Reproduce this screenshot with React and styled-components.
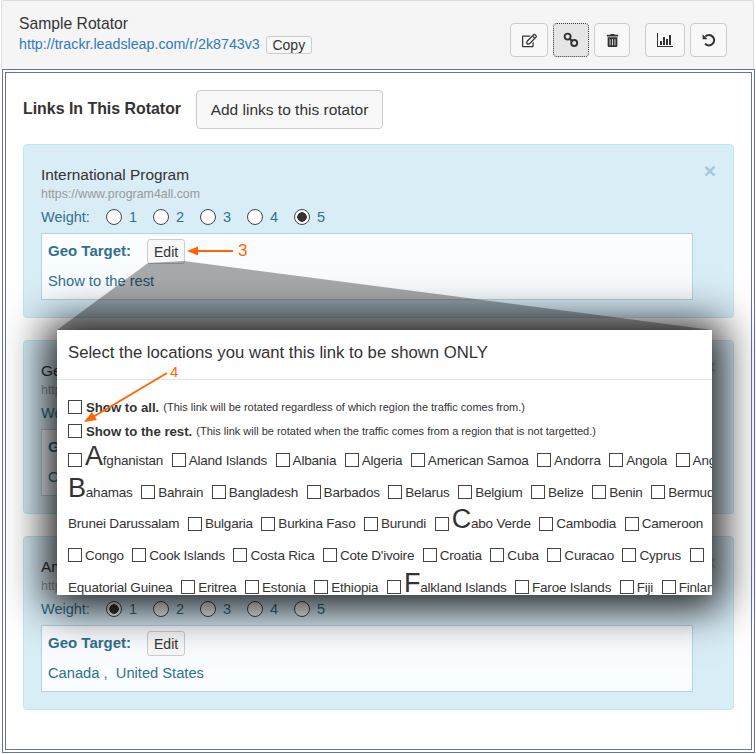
import React from "react";
import styled, { createGlobalStyle } from "styled-components";
import { FaRegEdit, FaTrashAlt } from "react-icons/fa";

const GlobalStyle = createGlobalStyle`
  html, body {
    margin: 0;
    padding: 0;
    background: #fff;
    font-family: "Liberation Sans", Arial, sans-serif;
    color: #333;
  }
  * { box-sizing: border-box; }
`;

const LinkIcon = () => (
  <svg width="16" height="16" viewBox="0 0 16 16" fill="none" stroke="#333" strokeWidth="1.9">
    <circle cx="4.6" cy="4.6" r="3" />
    <circle cx="11.2" cy="11" r="3" />
    <path d="M6.5 6.5l3 3" />
  </svg>
);

const StatsIcon = () => (
  <svg width="16" height="14" viewBox="0 0 16 14" fill="#333">
    <rect x="0" y="0" width="1" height="13" />
    <rect x="0" y="13" width="16" height="1" />
    <rect x="3" y="8" width="2" height="4" />
    <rect x="6" y="4" width="2" height="8" />
    <rect x="9" y="6" width="2" height="6" />
    <rect x="12" y="2" width="2" height="10" />
  </svg>
);

const UndoIcon = () => (
  <svg width="14" height="14" viewBox="0 0 14 14" fill="none">
    <path d="M3.4 3.4A5.2 5.2 0 1 1 3 10.6" stroke="#333" strokeWidth="2" />
    <path d="M0.6 1.2v5h5z" fill="#333" />
  </svg>
);

const links = [
  {
    title: "International Program",
    url: "https://www.program4all.com",
    weight: 5,
    geo: ["Show to the rest"],
  },
  {
    title: "German Program",
    url: "https://www.program4de.com",
    weight: 3,
    geo: ["Canada"],
  },
  {
    title: "American Program",
    url: "https://www.program4us.com",
    weight: 1,
    geo: ["Canada", "United States"],
  },
];

const countryRows = [
  [
    { big: "A", name: "fghanistan", box: true },
    { name: "Aland Islands", box: true },
    { name: "Albania", box: true },
    { name: "Algeria", box: true },
    { name: "American Samoa", box: true },
    { name: "Andorra", box: true },
    { name: "Angola", box: true },
    { name: "Anguilla", box: true },
  ],
  [
    { big: "B", name: "ahamas" },
    { name: "Bahrain", box: true },
    { name: "Bangladesh", box: true },
    { name: "Barbados", box: true },
    { name: "Belarus", box: true },
    { name: "Belgium", box: true },
    { name: "Belize", box: true },
    { name: "Benin", box: true },
    { name: "Bermuda", box: true },
  ],
  [
    { name: "Brunei Darussalam" },
    { name: "Bulgaria", box: true },
    { name: "Burkina Faso", box: true },
    { name: "Burundi", box: true },
    { big: "C", name: "abo Verde", box: true },
    { name: "Cambodia", box: true },
    { name: "Cameroon", box: true },
  ],
  [
    { name: "Congo", box: true },
    { name: "Cook Islands", box: true },
    { name: "Costa Rica", box: true },
    { name: "Cote D'ivoire", box: true },
    { name: "Croatia", box: true },
    { name: "Cuba", box: true },
    { name: "Curacao", box: true },
    { name: "Cyprus", box: true },
    { name: "", box: true },
  ],
  [
    { name: "Equatorial Guinea" },
    { name: "Eritrea", box: true },
    { name: "Estonia", box: true },
    { name: "Ethiopia", box: true },
    { big: "F", name: "alkland Islands", box: true },
    { name: "Faroe Islands", box: true },
    { name: "Fiji", box: true },
    { name: "Finland", box: true },
  ],
];

const LinkCard = ({ link }) => (
  <Card>
    <CloseMark>×</CloseMark>
    <CardTitle>{link.title}</CardTitle>
    <CardUrl>{link.url}</CardUrl>
    <WeightRow>
      <WeightLabel>Weight:</WeightLabel>
      {[1, 2, 3, 4, 5].map((n) => (
        <WeightOption key={n}>
          <Radio $on={n === link.weight} />
          {n}
        </WeightOption>
      ))}
    </WeightRow>
    <GeoBox>
      <GeoHead>
        <GeoLabel>Geo Target:</GeoLabel>
        <EditButton>Edit</EditButton>
      </GeoHead>
      <GeoList>{link.geo.join(" ,  ")}</GeoList>
    </GeoBox>
  </Card>
);

const App = () => (
  <Page>
    <GlobalStyle />
    <Header>
      <div>
        <RotatorName>Sample Rotator</RotatorName>
        <UrlLine>
          <RotatorUrl>http://trackr.leadsleap.com/r/2k8743v3</RotatorUrl>
          <CopyButton>Copy</CopyButton>
        </UrlLine>
      </div>
      <Toolbar>
        <ToolGroup>
          <ToolButton $w={38}><FaRegEdit size={15} /></ToolButton>
          <ToolButton $w={36} $active><LinkIcon /></ToolButton>
          <ToolButton $w={36}><FaTrashAlt size={13} /></ToolButton>
        </ToolGroup>
        <ToolGroup>
          <ToolButton $w={40}><StatsIcon /></ToolButton>
          <ToolButton $w={37}><UndoIcon /></ToolButton>
        </ToolGroup>
      </Toolbar>
    </Header>
    <Frame>
      <Heading>
        <HeadingText>Links In This Rotator</HeadingText>
        <AddButton>Add links to this rotator</AddButton>
      </Heading>
      <Cards>
        {links.map((link) => (
          <LinkCard key={link.title} link={link} />
        ))}
      </Cards>
    </Frame>

    <Callout width="756" height="754" viewBox="0 0 756 754">
      <polygon points="148,263 184,261 712,330 57,330" fill="rgba(0,0,0,0.33)" />
      <path d="M233 251H195" stroke="#f60" strokeWidth="2" />
      <path d="M187 251l11-4.5v9z" fill="#f60" />
    </Callout>
    <StepNumber $x={238} $y={243} $size={17}>3</StepNumber>

    <Modal>
      <ModalTitle>Select the locations you want this link to be shown ONLY</ModalTitle>
      <ModalBody>
        <OptionRow>
          <CheckBox />
          <OptionName>Show to all.</OptionName>
          <OptionHint>(This link will be rotated regardless of which region the traffic comes from.)</OptionHint>
        </OptionRow>
        <OptionRow>
          <CheckBox />
          <OptionName>Show to the rest.</OptionName>
          <OptionHint>(This link will be rotated when the traffic comes from a region that is not targetted.)</OptionHint>
        </OptionRow>
        {countryRows.map((row, i) => (
          <CountryRow key={i}>
            {row.map((c) => (
              <Country key={(c.big || "") + c.name}>
                {c.box && <CheckBox />}
                <CountryName>
                  {c.big && <BigLetter>{c.big}</BigLetter>}
                  {c.name}
                </CountryName>
              </Country>
            ))}
          </CountryRow>
        ))}
      </ModalBody>
    </Modal>
    <StepNumber $x={170} $y={364} $size={15}>4</StepNumber>
    <Callout width="756" height="754" viewBox="0 0 756 754">
      <path d="M167 373L93 417" stroke="#f60" strokeWidth="2" />
      <path d="M84 422l8-10 5 8z" fill="#f60" />
    </Callout>
  </Page>
);

export default App;

const Page = styled.div`
  position: relative;
  width: 756px;
  height: 754px;
  overflow: hidden;
`;

const Header = styled.header`
  display: flex;
  justify-content: space-between;
  height: 69px;
  margin: 0 2px 0 1px;
  padding: 14px 26px 0 17px;
  background: #f5f5f5;
  border: 1px solid #ddd;
  border-bottom: none;
  border-radius: 3px 3px 0 0;
`;

const RotatorName = styled.div`
  font-size: 15.7px;
  line-height: 18px;
`;

const UrlLine = styled.div`
  display: flex;
  align-items: center;
  gap: 6px;
  margin-top: 1px;
  height: 20px;
`;

const RotatorUrl = styled.a`
  font-size: 14.25px;
  color: #337ab7;
`;

const CopyButton = styled.button`
  width: 46px;
  height: 18px;
  padding: 0;
  margin-top: 1px;
  font: 14px "Liberation Sans", Arial, sans-serif;
  color: #333;
  background: #f8f8f8;
  border: 1px solid #ccc;
  border-radius: 3px;
`;

const Toolbar = styled.div`
  display: flex;
  gap: 15px;
  padding-top: 8px;
`;

const ToolGroup = styled.div`
  display: flex;
  gap: 5px;
`;

const ToolButton = styled.button`
  display: flex;
  align-items: center;
  justify-content: center;
  width: ${(p) => p.$w}px;
  height: 34px;
  padding: 0;
  color: #333;
  background: ${(p) => (p.$active ? "#e6e6e6" : "#f8f8f8")};
  border: 1px ${(p) => (p.$active ? "dotted #333" : "solid #ccc")};
  border-radius: 4px;
`;

const Frame = styled.main`
  height: 684px;
  margin: 0 1px 0 2px;
  padding: 17px 17px 0;
  border: 4px double #66739c;
`;

const Heading = styled.div`
  display: flex;
  align-items: center;
  gap: 14px;
  height: 39px;
`;

const HeadingText = styled.h2`
  width: 159px;
  margin: 0 0 2px;
  font-size: 15.9px;
  font-weight: 700;
`;

const AddButton = styled.button`
  width: 187px;
  height: 39px;
  padding: 0;
  font: 15.5px "Liberation Sans", Arial, sans-serif;
  color: #333;
  background: #f8f8f8;
  border: 1px solid #ccc;
  border-radius: 4px;
`;

const Cards = styled.div`
  display: flex;
  flex-direction: column;
  gap: 22px;
  margin-top: 15px;
`;

const Card = styled.section`
  position: relative;
  height: 174px;
  padding: 21px 40px 0 17px;
  background: #d9edf7;
  border: 1px solid #bce8f1;
  border-radius: 4px;
`;

const CloseMark = styled.span`
  position: absolute;
  top: 15px;
  right: 17px;
  font-size: 21px;
  line-height: 21px;
  font-weight: 700;
  color: #a9c6d4;
`;

const CardTitle = styled.div`
  font-size: 15.4px;
  line-height: 18px;
`;

const CardUrl = styled.div`
  margin-top: 3px;
  font-size: 12.4px;
  line-height: 14px;
  color: #999;
`;

const WeightRow = styled.div`
  display: flex;
  align-items: center;
  height: 20px;
  margin-top: 6px;
  font-size: 14.5px;
  color: #31708f;
`;

const WeightLabel = styled.span`
  width: 65px;
`;

const WeightOption = styled.label`
  display: flex;
  align-items: center;
  gap: 7px;
  width: 47px;
`;

const Radio = styled.span`
  display: block;
  flex: none;
  width: 16px;
  height: 16px;
  border: 1px solid #444;
  border-radius: 50%;
  background: ${(p) => (p.$on ? "radial-gradient(circle, #333 0 4.5px, #fff 5px)" : "#fff")};
`;

const GeoBox = styled.div`
  height: 67px;
  margin-top: 6px;
  padding: 5px 6px 0;
  background: #fafdff;
  border: 1px solid #b5d3e0;
`;

const GeoHead = styled.div`
  display: flex;
  align-items: center;
  gap: 16px;
`;

const GeoLabel = styled.strong`
  padding-bottom: 2px;
  font-size: 15px;
  color: #31708f;
`;

const EditButton = styled.button`
  width: 38px;
  height: 25px;
  padding: 0;
  font: 14px "Liberation Sans", Arial, sans-serif;
  color: #333;
  background: #f8f8f8;
  border: 1px solid #ccc;
  border-radius: 3px;
`;

const GeoList = styled.div`
  margin-top: 8px;
  font-size: 14.7px;
  line-height: 18px;
  color: #31708f;
  white-space: pre;
`;

const Callout = styled.svg`
  position: absolute;
  inset: 0;
  pointer-events: none;
`;

const StepNumber = styled.span`
  position: absolute;
  left: ${(p) => p.$x}px;
  top: ${(p) => p.$y}px;
  font-size: ${(p) => p.$size}px;
  line-height: 16px;
  color: #f60;
`;

const Modal = styled.div`
  position: absolute;
  left: 57px;
  top: 330px;
  width: 655px;
  height: 265px;
  overflow: hidden;
  background: #fff;
  box-shadow: 0 3px 40px 10px rgba(0, 0, 0, 0.9);
`;

const ModalTitle = styled.h3`
  height: 50px;
  margin: 0;
  padding: 14px 11px 0;
  font-size: 16.7px;
  line-height: 18px;
  font-weight: 400;
  border-bottom: 1px solid #e5e5e5;
`;

const ModalBody = styled.div`
  padding: 15px 11px 0;
`;

const OptionRow = styled.div`
  display: flex;
  align-items: center;
  gap: 4px;
  height: 24px;
  white-space: nowrap;
`;

const CheckBox = styled.span`
  flex: none;
  display: block;
  width: 14px;
  height: 14px;
  background: #fff;
  border: 1px solid #444;
`;

const OptionName = styled.strong`
  font-size: 13.2px;
`;

const OptionHint = styled.span`
  font-size: 11px;
`;

const CountryRow = styled.div`
  display: flex;
  align-items: center;
  gap: 8.5px;
  height: 31.7px;
  padding-top: 3px;
  white-space: nowrap;
`;

const Country = styled.span`
  display: flex;
  align-items: center;
  gap: 3px;
  height: 20px;
`;

const CountryName = styled.span`
  font-size: 13.5px;
  letter-spacing: -0.2px;
`;

const BigLetter = styled.span`
  font-size: 27px;
  line-height: 0;
`;
